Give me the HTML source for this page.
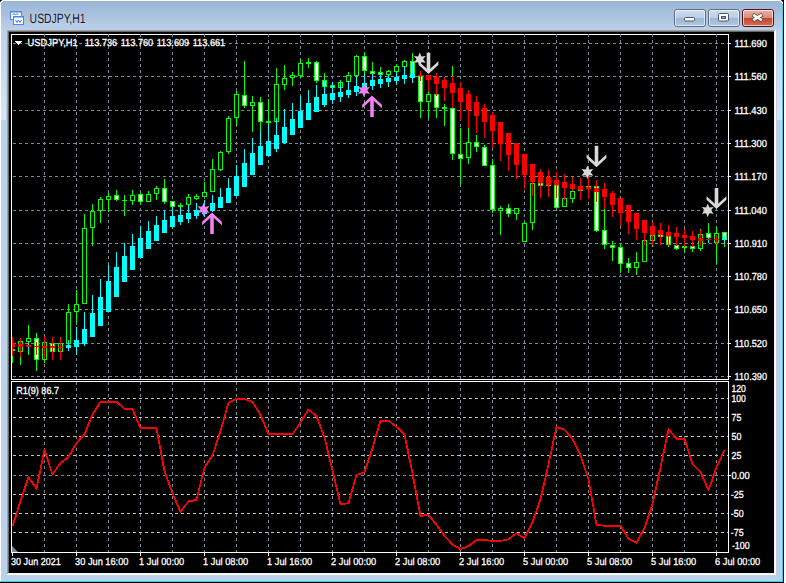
<!DOCTYPE html>
<html lang="en"><head><meta charset="utf-8"><title>USDJPY,H1</title>
<style>html,body{margin:0;padding:0;background:#fff;overflow:hidden}svg{display:block}text{font-family:"Liberation Sans",sans-serif;}.ax{font-size:10.2px;fill:#fff;stroke:#fff;stroke-width:0.3px}</style></head><body>
<svg width="786" height="583" viewBox="0 0 786 583">
<defs><linearGradient id="tb" x1="0" y1="0" x2="0" y2="1"><stop offset="0" stop-color="#9ab5d5"/><stop offset="0.5" stop-color="#a9c2df"/><stop offset="1" stop-color="#bdd2eb"/></linearGradient><linearGradient id="bt" x1="0" y1="0" x2="0" y2="1"><stop offset="0" stop-color="#cbdbee"/><stop offset="0.47" stop-color="#bccfe6"/><stop offset="0.5" stop-color="#9eb6d4"/><stop offset="1" stop-color="#b2c8e2"/></linearGradient><linearGradient id="bc" x1="0" y1="0" x2="0" y2="1"><stop offset="0" stop-color="#ebb5a8"/><stop offset="0.47" stop-color="#dc8c7b"/><stop offset="0.5" stop-color="#c2452c"/><stop offset="1" stop-color="#d4705a"/></linearGradient><clipPath id="cm"><rect x="12" y="35" width="716" height="344"/></clipPath><clipPath id="ci"><rect x="12" y="382" width="716" height="170"/></clipPath></defs>
<rect width="786" height="583" fill="#fff"/>
<rect x="0" y="0" width="2" height="2" fill="#000"/>
<rect x="781" y="0" width="3" height="2" fill="#000"/>
<path d="M0 583 V4 Q0 0 4 0 H779 Q783 0 783 4 V583 Z" fill="#fff"/>
<path d="M1 583 V5 Q1 1 5 1 H778 Q782 1 782 5 V583 Z" fill="#bad1ea"/>
<path d="M1 31 V5 Q1 1 5 1 H778 Q782 1 782 5 V31 Z" fill="url(#tb)"/>
<linearGradient id="sb" x1="0" y1="0" x2="0" y2="1"><stop offset="0" stop-color="#bdd2eb"/><stop offset="1" stop-color="#d8e6f4"/></linearGradient>
<rect x="1" y="30" width="5" height="90" fill="url(#sb)"/>
<rect x="777" y="30" width="5" height="90" fill="url(#sb)"/>
<rect x="781" y="120" width="1" height="461" fill="#c3cde3"/>
<rect x="1" y="580" width="781" height="1" fill="#c3cde3"/>
<rect x="782" y="4" width="1" height="579" fill="#3fcff5"/>
<rect x="783" y="2" width="1" height="581" fill="#000"/>
<rect x="0" y="581" width="783" height="1" fill="#30d0f0"/>
<rect x="0" y="582" width="784" height="1" fill="#000"/>
<rect x="7" y="30" width="769" height="545" fill="#fff"/>
<rect x="7" y="30" width="768" height="544" fill="#a0a0a0"/>
<rect x="8" y="31" width="767" height="543" fill="#eeeeee"/>
<rect x="8" y="31" width="766" height="542" fill="#696969"/>
<rect x="9" y="32" width="765" height="541" fill="#000"/>
<g shape-rendering="crispEdges"><rect x="10.5" y="11.5" width="11" height="8" fill="#fff" stroke="#4a86f0"/><rect x="11" y="12" width="10" height="1" fill="#9cc0f8"/><rect x="13.5" y="16.5" width="10" height="8" fill="#fff" stroke="#4a86f0"/><rect x="14" y="17" width="9" height="1" fill="#9cc0f8"/></g><path d="M12.5 15 l1.5 -1.5 l1.5 1.5 l1.5 -1.5 l1.5 1.5" fill="none" stroke="#3a78e8" stroke-width="1"/><path d="M15.5 20 l1.5 2.5 l1.5 -2.5 l1.5 2.5 l1.5 -2.5" fill="none" stroke="#3a78e8" stroke-width="1"/>
<text transform="translate(29.6,23.1) rotate(0.03)" font-size="13.6px" fill="#fff" stroke="#fff" stroke-width="3" opacity="0.12" textLength="56" lengthAdjust="spacingAndGlyphs">USDJPY,H1</text>
<text transform="translate(29.6,23.1) rotate(0.03)" font-size="13.6px" fill="#16162e" textLength="56" lengthAdjust="spacingAndGlyphs">USDJPY,H1</text>
<rect x="674.5" y="9.5" width="31" height="17" rx="2.5" ry="2.5" fill="url(#bt)" stroke="#5c6f8a"/>
<rect x="675.5" y="10.5" width="29" height="15" rx="1.5" ry="1.5" fill="none" stroke="#fff" stroke-opacity="0.6"/>
<rect x="708.5" y="9.5" width="31" height="17" rx="2.5" ry="2.5" fill="url(#bt)" stroke="#5c6f8a"/>
<rect x="709.5" y="10.5" width="29" height="15" rx="1.5" ry="1.5" fill="none" stroke="#fff" stroke-opacity="0.6"/>
<rect x="742.5" y="9.5" width="31" height="17" rx="2.5" ry="2.5" fill="url(#bc)" stroke="#4a1420"/>
<rect x="743.5" y="10.5" width="29" height="15" rx="1.5" ry="1.5" fill="none" stroke="#fff" stroke-opacity="0.6"/>
<rect x="684.5" y="17.5" width="10" height="3.5" rx="1" fill="#fff" stroke="#4a5468"/>
<rect x="718.5" y="13.5" width="10" height="7.5" rx="1" fill="#fff" stroke="#4a5468"/>
<rect x="721.5" y="16.5" width="4" height="2" fill="#8fa6c4" stroke="#4a5468"/>
<path d="M754.3 15.5 L760.7 19.5 M760.7 15.5 L754.3 19.5" stroke="#6a4a4a" stroke-width="4" stroke-linecap="square" fill="none"/>
<path d="M754.3 15.5 L760.7 19.5 M760.7 15.5 L754.3 19.5" stroke="#fff" stroke-width="2.5" stroke-linecap="square" fill="none"/>
<g shape-rendering="crispEdges">
<rect x="11" y="34" width="718" height="1" fill="#ffffff"/>
<rect x="11" y="34" width="1" height="346" fill="#ffffff"/>
<rect x="728" y="34" width="1" height="346" fill="#ffffff"/>
<rect x="11" y="379" width="718" height="1" fill="#ffffff"/>
<rect x="11" y="381" width="718" height="1" fill="#ffffff"/>
<rect x="11" y="381" width="1" height="172" fill="#ffffff"/>
<rect x="728" y="381" width="1" height="172" fill="#ffffff"/>
<rect x="11" y="552" width="718" height="1" fill="#ffffff"/>
<line x1="13" x2="728" y1="43.5" y2="43.5" stroke="#778899" stroke-dasharray="3 3"/>
<rect x="729" y="43" width="2" height="1" fill="#ffffff"/>
<line x1="13" x2="728" y1="76.5" y2="76.5" stroke="#778899" stroke-dasharray="3 3"/>
<rect x="729" y="76" width="2" height="1" fill="#ffffff"/>
<line x1="13" x2="728" y1="110.5" y2="110.5" stroke="#778899" stroke-dasharray="3 3"/>
<rect x="729" y="110" width="2" height="1" fill="#ffffff"/>
<line x1="13" x2="728" y1="143.5" y2="143.5" stroke="#778899" stroke-dasharray="3 3"/>
<rect x="729" y="143" width="2" height="1" fill="#ffffff"/>
<line x1="13" x2="728" y1="176.5" y2="176.5" stroke="#778899" stroke-dasharray="3 3"/>
<rect x="729" y="176" width="2" height="1" fill="#ffffff"/>
<line x1="13" x2="728" y1="210.5" y2="210.5" stroke="#778899" stroke-dasharray="3 3"/>
<rect x="729" y="210" width="2" height="1" fill="#ffffff"/>
<line x1="13" x2="728" y1="243.5" y2="243.5" stroke="#778899" stroke-dasharray="3 3"/>
<rect x="729" y="243" width="2" height="1" fill="#ffffff"/>
<line x1="13" x2="728" y1="276.5" y2="276.5" stroke="#778899" stroke-dasharray="3 3"/>
<rect x="729" y="276" width="2" height="1" fill="#ffffff"/>
<line x1="13" x2="728" y1="309.5" y2="309.5" stroke="#778899" stroke-dasharray="3 3"/>
<rect x="729" y="309" width="2" height="1" fill="#ffffff"/>
<line x1="13" x2="728" y1="343.5" y2="343.5" stroke="#778899" stroke-dasharray="3 3"/>
<rect x="729" y="343" width="2" height="1" fill="#ffffff"/>
<line x1="13" x2="728" y1="376.5" y2="376.5" stroke="#778899" stroke-dasharray="3 3"/>
<rect x="729" y="376" width="2" height="1" fill="#ffffff"/>
<line x1="44.5" x2="44.5" y1="34" y2="379" stroke="#778899" stroke-dasharray="3 3"/>
<line x1="44.5" x2="44.5" y1="382" y2="552" stroke="#778899" stroke-dasharray="3 3" stroke-dashoffset="0"/>
<line x1="76.5" x2="76.5" y1="34" y2="379" stroke="#778899" stroke-dasharray="3 3"/>
<line x1="76.5" x2="76.5" y1="382" y2="552" stroke="#778899" stroke-dasharray="3 3" stroke-dashoffset="0"/>
<line x1="108.5" x2="108.5" y1="34" y2="379" stroke="#778899" stroke-dasharray="3 3"/>
<line x1="108.5" x2="108.5" y1="382" y2="552" stroke="#778899" stroke-dasharray="3 3" stroke-dashoffset="0"/>
<line x1="140.5" x2="140.5" y1="34" y2="379" stroke="#778899" stroke-dasharray="3 3"/>
<line x1="140.5" x2="140.5" y1="382" y2="552" stroke="#778899" stroke-dasharray="3 3" stroke-dashoffset="0"/>
<line x1="172.5" x2="172.5" y1="34" y2="379" stroke="#778899" stroke-dasharray="3 3"/>
<line x1="172.5" x2="172.5" y1="382" y2="552" stroke="#778899" stroke-dasharray="3 3" stroke-dashoffset="0"/>
<line x1="204.5" x2="204.5" y1="34" y2="379" stroke="#778899" stroke-dasharray="3 3"/>
<line x1="204.5" x2="204.5" y1="382" y2="552" stroke="#778899" stroke-dasharray="3 3" stroke-dashoffset="0"/>
<line x1="236.5" x2="236.5" y1="34" y2="379" stroke="#778899" stroke-dasharray="3 3"/>
<line x1="236.5" x2="236.5" y1="382" y2="552" stroke="#778899" stroke-dasharray="3 3" stroke-dashoffset="0"/>
<line x1="268.5" x2="268.5" y1="34" y2="379" stroke="#778899" stroke-dasharray="3 3"/>
<line x1="268.5" x2="268.5" y1="382" y2="552" stroke="#778899" stroke-dasharray="3 3" stroke-dashoffset="0"/>
<line x1="300.5" x2="300.5" y1="34" y2="379" stroke="#778899" stroke-dasharray="3 3"/>
<line x1="300.5" x2="300.5" y1="382" y2="552" stroke="#778899" stroke-dasharray="3 3" stroke-dashoffset="0"/>
<line x1="332.5" x2="332.5" y1="34" y2="379" stroke="#778899" stroke-dasharray="3 3"/>
<line x1="332.5" x2="332.5" y1="382" y2="552" stroke="#778899" stroke-dasharray="3 3" stroke-dashoffset="0"/>
<line x1="364.5" x2="364.5" y1="34" y2="379" stroke="#778899" stroke-dasharray="3 3"/>
<line x1="364.5" x2="364.5" y1="382" y2="552" stroke="#778899" stroke-dasharray="3 3" stroke-dashoffset="0"/>
<line x1="396.5" x2="396.5" y1="34" y2="379" stroke="#778899" stroke-dasharray="3 3"/>
<line x1="396.5" x2="396.5" y1="382" y2="552" stroke="#778899" stroke-dasharray="3 3" stroke-dashoffset="0"/>
<line x1="428.5" x2="428.5" y1="34" y2="379" stroke="#778899" stroke-dasharray="3 3"/>
<line x1="428.5" x2="428.5" y1="382" y2="552" stroke="#778899" stroke-dasharray="3 3" stroke-dashoffset="0"/>
<line x1="460.5" x2="460.5" y1="34" y2="379" stroke="#778899" stroke-dasharray="3 3"/>
<line x1="460.5" x2="460.5" y1="382" y2="552" stroke="#778899" stroke-dasharray="3 3" stroke-dashoffset="0"/>
<line x1="492.5" x2="492.5" y1="34" y2="379" stroke="#778899" stroke-dasharray="3 3"/>
<line x1="492.5" x2="492.5" y1="382" y2="552" stroke="#778899" stroke-dasharray="3 3" stroke-dashoffset="0"/>
<line x1="524.5" x2="524.5" y1="34" y2="379" stroke="#778899" stroke-dasharray="3 3"/>
<line x1="524.5" x2="524.5" y1="382" y2="552" stroke="#778899" stroke-dasharray="3 3" stroke-dashoffset="0"/>
<line x1="556.5" x2="556.5" y1="34" y2="379" stroke="#778899" stroke-dasharray="3 3"/>
<line x1="556.5" x2="556.5" y1="382" y2="552" stroke="#778899" stroke-dasharray="3 3" stroke-dashoffset="0"/>
<line x1="588.5" x2="588.5" y1="34" y2="379" stroke="#778899" stroke-dasharray="3 3"/>
<line x1="588.5" x2="588.5" y1="382" y2="552" stroke="#778899" stroke-dasharray="3 3" stroke-dashoffset="0"/>
<line x1="620.5" x2="620.5" y1="34" y2="379" stroke="#778899" stroke-dasharray="3 3"/>
<line x1="620.5" x2="620.5" y1="382" y2="552" stroke="#778899" stroke-dasharray="3 3" stroke-dashoffset="0"/>
<line x1="652.5" x2="652.5" y1="34" y2="379" stroke="#778899" stroke-dasharray="3 3"/>
<line x1="652.5" x2="652.5" y1="382" y2="552" stroke="#778899" stroke-dasharray="3 3" stroke-dashoffset="0"/>
<line x1="684.5" x2="684.5" y1="34" y2="379" stroke="#778899" stroke-dasharray="3 3"/>
<line x1="684.5" x2="684.5" y1="382" y2="552" stroke="#778899" stroke-dasharray="3 3" stroke-dashoffset="0"/>
<line x1="716.5" x2="716.5" y1="34" y2="379" stroke="#778899" stroke-dasharray="3 3"/>
<line x1="716.5" x2="716.5" y1="382" y2="552" stroke="#778899" stroke-dasharray="3 3" stroke-dashoffset="0"/>
<line x1="13" x2="728" y1="398.5" y2="398.5" stroke="#c4c4c4" stroke-dasharray="3 3"/>
<line x1="13" x2="728" y1="417.5" y2="417.5" stroke="#c4c4c4" stroke-dasharray="3 3"/>
<line x1="13" x2="728" y1="436.5" y2="436.5" stroke="#c4c4c4" stroke-dasharray="3 3"/>
<line x1="13" x2="728" y1="455.5" y2="455.5" stroke="#c4c4c4" stroke-dasharray="3 3"/>
<line x1="13" x2="728" y1="494.5" y2="494.5" stroke="#c4c4c4" stroke-dasharray="3 3"/>
<line x1="13" x2="728" y1="513.5" y2="513.5" stroke="#c4c4c4" stroke-dasharray="3 3"/>
<line x1="13" x2="728" y1="532.5" y2="532.5" stroke="#c4c4c4" stroke-dasharray="3 3"/>
<line x1="13" x2="728" y1="475.5" y2="475.5" stroke="#778899" stroke-dasharray="3 3"/>
<rect x="729" y="475" width="2" height="1" fill="#ffffff"/>
<rect x="12" y="553" width="1" height="3" fill="#ffffff"/>
<rect x="76" y="553" width="1" height="3" fill="#ffffff"/>
<rect x="140" y="553" width="1" height="3" fill="#ffffff"/>
<rect x="204" y="553" width="1" height="3" fill="#ffffff"/>
<rect x="268" y="553" width="1" height="3" fill="#ffffff"/>
<rect x="332" y="553" width="1" height="3" fill="#ffffff"/>
<rect x="396" y="553" width="1" height="3" fill="#ffffff"/>
<rect x="460" y="553" width="1" height="3" fill="#ffffff"/>
<rect x="524" y="553" width="1" height="3" fill="#ffffff"/>
<rect x="588" y="553" width="1" height="3" fill="#ffffff"/>
<rect x="652" y="553" width="1" height="3" fill="#ffffff"/>
<rect x="716" y="553" width="1" height="3" fill="#ffffff"/>
</g>
<g shape-rendering="crispEdges" clip-path="url(#cm)">
<rect x="12" y="337" width="1" height="26" fill="#00ff00"/>
<rect x="10" y="349" width="5" height="2" fill="#00ff00"/>
<rect x="20" y="338" width="1" height="27" fill="#00ff00"/>
<rect x="18" y="341" width="5" height="11" fill="#00ff00"/>
<rect x="19" y="342" width="3" height="9" fill="#000"/>
<rect x="28" y="325" width="1" height="30" fill="#00ff00"/>
<rect x="26" y="338" width="5" height="4" fill="#00ff00"/>
<rect x="27" y="339" width="3" height="2" fill="#000"/>
<rect x="36" y="333" width="1" height="38" fill="#00ff00"/>
<rect x="34" y="338" width="5" height="22" fill="#00ff00"/>
<rect x="35" y="339" width="3" height="20" fill="#fff"/>
<rect x="44" y="336" width="1" height="27" fill="#00ff00"/>
<rect x="42" y="342" width="5" height="18" fill="#00ff00"/>
<rect x="43" y="343" width="3" height="16" fill="#000"/>
<rect x="52" y="337" width="1" height="23" fill="#00ff00"/>
<rect x="50" y="343" width="5" height="9" fill="#00ff00"/>
<rect x="51" y="344" width="3" height="7" fill="#fff"/>
<rect x="60" y="337" width="1" height="23" fill="#00ff00"/>
<rect x="58" y="343" width="5" height="9" fill="#00ff00"/>
<rect x="59" y="344" width="3" height="7" fill="#000"/>
<rect x="68" y="304" width="1" height="40" fill="#00ff00"/>
<rect x="66" y="312" width="5" height="32" fill="#00ff00"/>
<rect x="67" y="313" width="3" height="30" fill="#000"/>
<rect x="76" y="290" width="1" height="33" fill="#00ff00"/>
<rect x="74" y="304" width="5" height="8" fill="#00ff00"/>
<rect x="75" y="305" width="3" height="6" fill="#000"/>
<rect x="84" y="214" width="1" height="90" fill="#00ff00"/>
<rect x="82" y="228" width="5" height="76" fill="#00ff00"/>
<rect x="83" y="229" width="3" height="74" fill="#000"/>
<rect x="92" y="204" width="1" height="42" fill="#00ff00"/>
<rect x="90" y="211" width="5" height="17" fill="#00ff00"/>
<rect x="91" y="212" width="3" height="15" fill="#000"/>
<rect x="100" y="197" width="1" height="26" fill="#00ff00"/>
<rect x="98" y="199" width="5" height="12" fill="#00ff00"/>
<rect x="99" y="200" width="3" height="10" fill="#000"/>
<rect x="108" y="193" width="1" height="19" fill="#00ff00"/>
<rect x="106" y="196" width="5" height="4" fill="#00ff00"/>
<rect x="107" y="197" width="3" height="2" fill="#000"/>
<rect x="116" y="190" width="1" height="11" fill="#00ff00"/>
<rect x="114" y="195" width="5" height="5" fill="#00ff00"/>
<rect x="115" y="196" width="3" height="3" fill="#fff"/>
<rect x="124" y="195" width="1" height="21" fill="#00ff00"/>
<rect x="122" y="200" width="5" height="1" fill="#00ff00"/>
<rect x="132" y="190" width="1" height="15" fill="#00ff00"/>
<rect x="130" y="195" width="5" height="6" fill="#00ff00"/>
<rect x="131" y="196" width="3" height="4" fill="#000"/>
<rect x="140" y="193" width="1" height="12" fill="#00ff00"/>
<rect x="138" y="194" width="5" height="8" fill="#00ff00"/>
<rect x="139" y="195" width="3" height="6" fill="#fff"/>
<rect x="148" y="191" width="1" height="11" fill="#00ff00"/>
<rect x="146" y="194" width="5" height="8" fill="#00ff00"/>
<rect x="147" y="195" width="3" height="6" fill="#000"/>
<rect x="156" y="186" width="1" height="14" fill="#00ff00"/>
<rect x="154" y="188" width="5" height="6" fill="#00ff00"/>
<rect x="155" y="189" width="3" height="4" fill="#000"/>
<rect x="164" y="179" width="1" height="25" fill="#00ff00"/>
<rect x="162" y="188" width="5" height="14" fill="#00ff00"/>
<rect x="163" y="189" width="3" height="12" fill="#fff"/>
<rect x="172" y="201" width="1" height="9" fill="#00ff00"/>
<rect x="170" y="201" width="5" height="6" fill="#00ff00"/>
<rect x="171" y="202" width="3" height="4" fill="#fff"/>
<rect x="180" y="203" width="1" height="7" fill="#00ff00"/>
<rect x="178" y="205" width="5" height="2" fill="#00ff00"/>
<rect x="188" y="194" width="1" height="13" fill="#00ff00"/>
<rect x="186" y="197" width="5" height="8" fill="#00ff00"/>
<rect x="187" y="198" width="3" height="6" fill="#000"/>
<rect x="196" y="194" width="1" height="6" fill="#00ff00"/>
<rect x="194" y="196" width="5" height="3" fill="#00ff00"/>
<rect x="195" y="197" width="3" height="1" fill="#000"/>
<rect x="204" y="182" width="1" height="15" fill="#00ff00"/>
<rect x="202" y="192" width="5" height="5" fill="#00ff00"/>
<rect x="203" y="193" width="3" height="3" fill="#000"/>
<rect x="212" y="159" width="1" height="33" fill="#00ff00"/>
<rect x="210" y="169" width="5" height="23" fill="#00ff00"/>
<rect x="211" y="170" width="3" height="21" fill="#000"/>
<rect x="220" y="151" width="1" height="20" fill="#00ff00"/>
<rect x="218" y="152" width="5" height="18" fill="#00ff00"/>
<rect x="219" y="153" width="3" height="16" fill="#000"/>
<rect x="228" y="116" width="1" height="38" fill="#00ff00"/>
<rect x="226" y="118" width="5" height="34" fill="#00ff00"/>
<rect x="227" y="119" width="3" height="32" fill="#000"/>
<rect x="236" y="91" width="1" height="35" fill="#00ff00"/>
<rect x="234" y="94" width="5" height="24" fill="#00ff00"/>
<rect x="235" y="95" width="3" height="22" fill="#000"/>
<rect x="244" y="61" width="1" height="47" fill="#00ff00"/>
<rect x="242" y="95" width="5" height="11" fill="#00ff00"/>
<rect x="243" y="96" width="3" height="9" fill="#fff"/>
<rect x="252" y="96" width="1" height="36" fill="#00ff00"/>
<rect x="250" y="102" width="5" height="4" fill="#00ff00"/>
<rect x="251" y="103" width="3" height="2" fill="#000"/>
<rect x="260" y="97" width="1" height="34" fill="#00ff00"/>
<rect x="258" y="102" width="5" height="20" fill="#00ff00"/>
<rect x="259" y="103" width="3" height="18" fill="#fff"/>
<rect x="268" y="99" width="1" height="24" fill="#00ff00"/>
<rect x="266" y="121" width="5" height="2" fill="#00ff00"/>
<rect x="276" y="68" width="1" height="54" fill="#00ff00"/>
<rect x="274" y="84" width="5" height="38" fill="#00ff00"/>
<rect x="275" y="85" width="3" height="36" fill="#000"/>
<rect x="284" y="65" width="1" height="25" fill="#00ff00"/>
<rect x="282" y="78" width="5" height="7" fill="#00ff00"/>
<rect x="283" y="79" width="3" height="5" fill="#000"/>
<rect x="292" y="72" width="1" height="14" fill="#00ff00"/>
<rect x="290" y="75" width="5" height="3" fill="#00ff00"/>
<rect x="291" y="76" width="3" height="1" fill="#000"/>
<rect x="300" y="59" width="1" height="19" fill="#00ff00"/>
<rect x="298" y="63" width="5" height="13" fill="#00ff00"/>
<rect x="299" y="64" width="3" height="11" fill="#000"/>
<rect x="308" y="58" width="1" height="10" fill="#00ff00"/>
<rect x="306" y="62" width="5" height="2" fill="#00ff00"/>
<rect x="316" y="61" width="1" height="22" fill="#00ff00"/>
<rect x="314" y="62" width="5" height="19" fill="#00ff00"/>
<rect x="315" y="63" width="3" height="17" fill="#fff"/>
<rect x="324" y="73" width="1" height="17" fill="#00ff00"/>
<rect x="322" y="80" width="5" height="7" fill="#00ff00"/>
<rect x="323" y="81" width="3" height="5" fill="#fff"/>
<rect x="332" y="82" width="1" height="8" fill="#00ff00"/>
<rect x="330" y="85" width="5" height="3" fill="#00ff00"/>
<rect x="331" y="86" width="3" height="1" fill="#fff"/>
<rect x="340" y="80" width="1" height="8" fill="#00ff00"/>
<rect x="338" y="82" width="5" height="6" fill="#00ff00"/>
<rect x="339" y="83" width="3" height="4" fill="#000"/>
<rect x="348" y="72" width="1" height="11" fill="#00ff00"/>
<rect x="346" y="75" width="5" height="7" fill="#00ff00"/>
<rect x="347" y="76" width="3" height="5" fill="#000"/>
<rect x="356" y="55" width="1" height="21" fill="#00ff00"/>
<rect x="354" y="56" width="5" height="20" fill="#00ff00"/>
<rect x="355" y="57" width="3" height="18" fill="#000"/>
<rect x="364" y="52" width="1" height="22" fill="#00ff00"/>
<rect x="362" y="56" width="5" height="15" fill="#00ff00"/>
<rect x="363" y="57" width="3" height="13" fill="#fff"/>
<rect x="372" y="62" width="1" height="12" fill="#00ff00"/>
<rect x="370" y="71" width="5" height="3" fill="#00ff00"/>
<rect x="371" y="72" width="3" height="1" fill="#fff"/>
<rect x="380" y="67" width="1" height="8" fill="#00ff00"/>
<rect x="378" y="72" width="5" height="3" fill="#00ff00"/>
<rect x="379" y="73" width="3" height="1" fill="#fff"/>
<rect x="388" y="70" width="1" height="5" fill="#00ff00"/>
<rect x="386" y="71" width="5" height="4" fill="#00ff00"/>
<rect x="387" y="72" width="3" height="2" fill="#000"/>
<rect x="396" y="64" width="1" height="8" fill="#00ff00"/>
<rect x="394" y="66" width="5" height="6" fill="#00ff00"/>
<rect x="395" y="67" width="3" height="4" fill="#000"/>
<rect x="404" y="60" width="1" height="7" fill="#00ff00"/>
<rect x="402" y="61" width="5" height="6" fill="#00ff00"/>
<rect x="403" y="62" width="3" height="4" fill="#000"/>
<rect x="412" y="53" width="1" height="22" fill="#00ff00"/>
<rect x="410" y="61" width="5" height="14" fill="#00ff00"/>
<rect x="411" y="62" width="3" height="12" fill="#fff"/>
<rect x="420" y="71" width="1" height="47" fill="#00ff00"/>
<rect x="418" y="76" width="5" height="26" fill="#00ff00"/>
<rect x="419" y="77" width="3" height="24" fill="#fff"/>
<rect x="428" y="92" width="1" height="26" fill="#00ff00"/>
<rect x="426" y="94" width="5" height="8" fill="#00ff00"/>
<rect x="427" y="95" width="3" height="6" fill="#000"/>
<rect x="436" y="94" width="1" height="24" fill="#00ff00"/>
<rect x="434" y="94" width="5" height="14" fill="#00ff00"/>
<rect x="435" y="95" width="3" height="12" fill="#fff"/>
<rect x="444" y="104" width="1" height="22" fill="#00ff00"/>
<rect x="442" y="107" width="5" height="2" fill="#00ff00"/>
<rect x="452" y="66" width="1" height="94" fill="#00ff00"/>
<rect x="450" y="108" width="5" height="46" fill="#00ff00"/>
<rect x="451" y="109" width="3" height="44" fill="#fff"/>
<rect x="460" y="128" width="1" height="56" fill="#00ff00"/>
<rect x="458" y="154" width="5" height="5" fill="#00ff00"/>
<rect x="459" y="155" width="3" height="3" fill="#fff"/>
<rect x="468" y="128" width="1" height="36" fill="#00ff00"/>
<rect x="466" y="142" width="5" height="16" fill="#00ff00"/>
<rect x="467" y="143" width="3" height="14" fill="#000"/>
<rect x="476" y="135" width="1" height="17" fill="#00ff00"/>
<rect x="474" y="142" width="5" height="5" fill="#00ff00"/>
<rect x="475" y="143" width="3" height="3" fill="#fff"/>
<rect x="484" y="145" width="1" height="21" fill="#00ff00"/>
<rect x="482" y="147" width="5" height="19" fill="#00ff00"/>
<rect x="483" y="148" width="3" height="17" fill="#fff"/>
<rect x="492" y="159" width="1" height="54" fill="#00ff00"/>
<rect x="490" y="165" width="5" height="45" fill="#00ff00"/>
<rect x="491" y="166" width="3" height="43" fill="#fff"/>
<rect x="500" y="206" width="1" height="29" fill="#00ff00"/>
<rect x="498" y="208" width="5" height="3" fill="#00ff00"/>
<rect x="499" y="209" width="3" height="1" fill="#000"/>
<rect x="508" y="204" width="1" height="13" fill="#00ff00"/>
<rect x="506" y="208" width="5" height="6" fill="#00ff00"/>
<rect x="507" y="209" width="3" height="4" fill="#fff"/>
<rect x="516" y="208" width="1" height="12" fill="#00ff00"/>
<rect x="514" y="208" width="5" height="6" fill="#00ff00"/>
<rect x="515" y="209" width="3" height="4" fill="#000"/>
<rect x="524" y="222" width="1" height="20" fill="#00ff00"/>
<rect x="522" y="223" width="5" height="19" fill="#00ff00"/>
<rect x="523" y="224" width="3" height="17" fill="#000"/>
<rect x="532" y="183" width="1" height="47" fill="#00ff00"/>
<rect x="530" y="183" width="5" height="40" fill="#00ff00"/>
<rect x="531" y="184" width="3" height="38" fill="#000"/>
<rect x="540" y="183" width="1" height="7" fill="#00ff00"/>
<rect x="538" y="183" width="5" height="3" fill="#00ff00"/>
<rect x="539" y="184" width="3" height="1" fill="#fff"/>
<rect x="548" y="185" width="1" height="1" fill="#00ff00"/>
<rect x="546" y="185" width="5" height="1" fill="#00ff00"/>
<rect x="556" y="185" width="1" height="24" fill="#00ff00"/>
<rect x="554" y="185" width="5" height="23" fill="#00ff00"/>
<rect x="555" y="186" width="3" height="21" fill="#fff"/>
<rect x="564" y="198" width="1" height="9" fill="#00ff00"/>
<rect x="562" y="198" width="5" height="9" fill="#00ff00"/>
<rect x="563" y="199" width="3" height="7" fill="#000"/>
<rect x="572" y="191" width="1" height="12" fill="#00ff00"/>
<rect x="570" y="191" width="5" height="8" fill="#00ff00"/>
<rect x="571" y="192" width="3" height="6" fill="#000"/>
<rect x="580" y="189" width="1" height="2" fill="#00ff00"/>
<rect x="578" y="190" width="5" height="1" fill="#00ff00"/>
<rect x="588" y="186" width="1" height="1" fill="#00ff00"/>
<rect x="586" y="186" width="5" height="1" fill="#00ff00"/>
<rect x="596" y="186" width="1" height="46" fill="#00ff00"/>
<rect x="594" y="186" width="5" height="45" fill="#00ff00"/>
<rect x="595" y="187" width="3" height="43" fill="#fff"/>
<rect x="604" y="209" width="1" height="40" fill="#00ff00"/>
<rect x="602" y="230" width="5" height="15" fill="#00ff00"/>
<rect x="603" y="231" width="3" height="13" fill="#fff"/>
<rect x="612" y="241" width="1" height="20" fill="#00ff00"/>
<rect x="610" y="245" width="5" height="3" fill="#00ff00"/>
<rect x="611" y="246" width="3" height="1" fill="#fff"/>
<rect x="620" y="244" width="1" height="29" fill="#00ff00"/>
<rect x="618" y="247" width="5" height="17" fill="#00ff00"/>
<rect x="619" y="248" width="3" height="15" fill="#fff"/>
<rect x="628" y="258" width="1" height="15" fill="#00ff00"/>
<rect x="626" y="263" width="5" height="5" fill="#00ff00"/>
<rect x="627" y="264" width="3" height="3" fill="#fff"/>
<rect x="636" y="252" width="1" height="23" fill="#00ff00"/>
<rect x="634" y="262" width="5" height="6" fill="#00ff00"/>
<rect x="635" y="263" width="3" height="4" fill="#000"/>
<rect x="644" y="240" width="1" height="22" fill="#00ff00"/>
<rect x="642" y="240" width="5" height="22" fill="#00ff00"/>
<rect x="643" y="241" width="3" height="20" fill="#000"/>
<rect x="652" y="235" width="1" height="12" fill="#00ff00"/>
<rect x="650" y="235" width="5" height="6" fill="#00ff00"/>
<rect x="651" y="236" width="3" height="4" fill="#000"/>
<rect x="660" y="234" width="1" height="4" fill="#00ff00"/>
<rect x="658" y="234" width="5" height="3" fill="#00ff00"/>
<rect x="659" y="235" width="3" height="1" fill="#fff"/>
<rect x="668" y="236" width="1" height="11" fill="#00ff00"/>
<rect x="666" y="236" width="5" height="9" fill="#00ff00"/>
<rect x="667" y="237" width="3" height="7" fill="#fff"/>
<rect x="676" y="245" width="1" height="5" fill="#00ff00"/>
<rect x="674" y="245" width="5" height="4" fill="#00ff00"/>
<rect x="675" y="246" width="3" height="2" fill="#fff"/>
<rect x="684" y="246" width="1" height="7" fill="#00ff00"/>
<rect x="682" y="246" width="5" height="2" fill="#00ff00"/>
<rect x="692" y="246" width="1" height="6" fill="#00ff00"/>
<rect x="690" y="246" width="5" height="3" fill="#00ff00"/>
<rect x="691" y="247" width="3" height="1" fill="#fff"/>
<rect x="700" y="229" width="1" height="22" fill="#00ff00"/>
<rect x="698" y="234" width="5" height="15" fill="#00ff00"/>
<rect x="699" y="235" width="3" height="13" fill="#000"/>
<rect x="708" y="223" width="1" height="15" fill="#00ff00"/>
<rect x="706" y="233" width="5" height="5" fill="#00ff00"/>
<rect x="707" y="234" width="3" height="3" fill="#fff"/>
<rect x="716" y="227" width="1" height="37" fill="#00ff00"/>
<rect x="714" y="233" width="5" height="10" fill="#00ff00"/>
<rect x="715" y="234" width="3" height="8" fill="#000"/>
<rect x="724" y="232" width="1" height="15" fill="#00ff00"/>
<rect x="722" y="232" width="5" height="8" fill="#00ff00"/>
<rect x="723" y="233" width="3" height="6" fill="#fff"/>
<rect x="12" y="337" width="1" height="19" fill="#FF0000"/>
<rect x="10" y="343" width="5" height="4" fill="#FF0000"/>
<rect x="20" y="338" width="1" height="19" fill="#FF0000"/>
<rect x="18" y="344" width="5" height="3" fill="#FF0000"/>
<rect x="28" y="342" width="1" height="9" fill="#00FFFF"/>
<rect x="26" y="345" width="5" height="2" fill="#FF0000"/>
<rect x="36" y="342" width="1" height="13" fill="#FF0000"/>
<rect x="34" y="346" width="5" height="1" fill="#FF0000"/>
<rect x="44" y="336" width="1" height="23" fill="#FF0000"/>
<rect x="42" y="346" width="5" height="2" fill="#FF0000"/>
<rect x="52" y="337" width="1" height="23" fill="#FF0000"/>
<rect x="50" y="346" width="5" height="2" fill="#FF0000"/>
<rect x="60" y="337" width="1" height="23" fill="#FF0000"/>
<rect x="58" y="347" width="5" height="1" fill="#FF0000"/>
<rect x="68" y="340" width="1" height="11" fill="#00FFFF"/>
<rect x="66" y="345" width="5" height="3" fill="#00FFFF"/>
<rect x="76" y="327" width="1" height="28" fill="#00FFFF"/>
<rect x="74" y="340" width="5" height="7" fill="#00FFFF"/>
<rect x="84" y="312" width="1" height="34" fill="#00FFFF"/>
<rect x="82" y="329" width="5" height="15" fill="#00FFFF"/>
<rect x="92" y="295" width="1" height="42" fill="#00FFFF"/>
<rect x="90" y="313" width="5" height="24" fill="#00FFFF"/>
<rect x="100" y="279" width="1" height="47" fill="#00FFFF"/>
<rect x="98" y="297" width="5" height="29" fill="#00FFFF"/>
<rect x="108" y="265" width="1" height="47" fill="#00FFFF"/>
<rect x="106" y="281" width="5" height="31" fill="#00FFFF"/>
<rect x="116" y="252" width="1" height="45" fill="#00FFFF"/>
<rect x="114" y="267" width="5" height="30" fill="#00FFFF"/>
<rect x="124" y="243" width="1" height="39" fill="#00FFFF"/>
<rect x="122" y="256" width="5" height="26" fill="#00FFFF"/>
<rect x="132" y="234" width="1" height="36" fill="#00FFFF"/>
<rect x="130" y="246" width="5" height="24" fill="#00FFFF"/>
<rect x="140" y="226" width="1" height="32" fill="#00FFFF"/>
<rect x="138" y="238" width="5" height="20" fill="#00FFFF"/>
<rect x="148" y="221" width="1" height="28" fill="#00FFFF"/>
<rect x="146" y="231" width="5" height="18" fill="#00FFFF"/>
<rect x="156" y="216" width="1" height="25" fill="#00FFFF"/>
<rect x="154" y="225" width="5" height="16" fill="#00FFFF"/>
<rect x="164" y="210" width="1" height="23" fill="#00FFFF"/>
<rect x="162" y="220" width="5" height="13" fill="#00FFFF"/>
<rect x="172" y="207" width="1" height="21" fill="#00FFFF"/>
<rect x="170" y="216" width="5" height="11" fill="#00FFFF"/>
<rect x="180" y="207" width="1" height="18" fill="#00FFFF"/>
<rect x="178" y="215" width="5" height="7" fill="#00FFFF"/>
<rect x="188" y="205" width="1" height="18" fill="#00FFFF"/>
<rect x="186" y="213" width="5" height="6" fill="#00FFFF"/>
<rect x="196" y="203" width="1" height="16" fill="#00FFFF"/>
<rect x="194" y="210" width="5" height="6" fill="#00FFFF"/>
<rect x="204" y="200" width="1" height="17" fill="#00FFFF"/>
<rect x="202" y="207" width="5" height="7" fill="#00FFFF"/>
<rect x="212" y="195" width="1" height="17" fill="#00FFFF"/>
<rect x="210" y="203" width="5" height="8" fill="#00FFFF"/>
<rect x="220" y="188" width="1" height="20" fill="#00FFFF"/>
<rect x="218" y="197" width="5" height="11" fill="#00FFFF"/>
<rect x="228" y="178" width="1" height="25" fill="#00FFFF"/>
<rect x="226" y="188" width="5" height="15" fill="#00FFFF"/>
<rect x="236" y="165" width="1" height="31" fill="#00FFFF"/>
<rect x="234" y="176" width="5" height="20" fill="#00FFFF"/>
<rect x="244" y="149" width="1" height="38" fill="#00FFFF"/>
<rect x="242" y="163" width="5" height="24" fill="#00FFFF"/>
<rect x="252" y="138" width="1" height="37" fill="#00FFFF"/>
<rect x="250" y="153" width="5" height="22" fill="#00FFFF"/>
<rect x="260" y="131" width="1" height="34" fill="#00FFFF"/>
<rect x="258" y="146" width="5" height="19" fill="#00FFFF"/>
<rect x="268" y="123" width="1" height="34" fill="#00FFFF"/>
<rect x="266" y="141" width="5" height="15" fill="#00FFFF"/>
<rect x="276" y="118" width="1" height="34" fill="#00FFFF"/>
<rect x="274" y="135" width="5" height="14" fill="#00FFFF"/>
<rect x="284" y="109" width="1" height="35" fill="#00FFFF"/>
<rect x="282" y="127" width="5" height="16" fill="#00FFFF"/>
<rect x="292" y="103" width="1" height="32" fill="#00FFFF"/>
<rect x="290" y="119" width="5" height="16" fill="#00FFFF"/>
<rect x="300" y="96" width="1" height="32" fill="#00FFFF"/>
<rect x="298" y="111" width="5" height="17" fill="#00FFFF"/>
<rect x="308" y="90" width="1" height="30" fill="#00FFFF"/>
<rect x="306" y="103" width="5" height="17" fill="#00FFFF"/>
<rect x="316" y="85" width="1" height="27" fill="#00FFFF"/>
<rect x="314" y="97" width="5" height="15" fill="#00FFFF"/>
<rect x="324" y="81" width="1" height="26" fill="#00FFFF"/>
<rect x="322" y="94" width="5" height="11" fill="#00FFFF"/>
<rect x="332" y="82" width="1" height="22" fill="#00FFFF"/>
<rect x="330" y="93" width="5" height="7" fill="#00FFFF"/>
<rect x="340" y="83" width="1" height="19" fill="#00FFFF"/>
<rect x="338" y="92" width="5" height="5" fill="#00FFFF"/>
<rect x="348" y="81" width="1" height="17" fill="#00FFFF"/>
<rect x="346" y="90" width="5" height="5" fill="#00FFFF"/>
<rect x="356" y="76" width="1" height="20" fill="#00FFFF"/>
<rect x="354" y="86" width="5" height="6" fill="#00FFFF"/>
<rect x="364" y="74" width="1" height="19" fill="#00FFFF"/>
<rect x="362" y="83" width="5" height="7" fill="#00FFFF"/>
<rect x="372" y="74" width="1" height="16" fill="#00FFFF"/>
<rect x="370" y="80" width="5" height="6" fill="#00FFFF"/>
<rect x="380" y="74" width="1" height="14" fill="#00FFFF"/>
<rect x="378" y="79" width="5" height="5" fill="#00FFFF"/>
<rect x="388" y="75" width="1" height="12" fill="#00FFFF"/>
<rect x="386" y="78" width="5" height="4" fill="#00FFFF"/>
<rect x="396" y="72" width="1" height="13" fill="#00FFFF"/>
<rect x="394" y="77" width="5" height="4" fill="#00FFFF"/>
<rect x="404" y="67" width="1" height="17" fill="#00FFFF"/>
<rect x="402" y="75" width="5" height="4" fill="#00FFFF"/>
<rect x="412" y="63" width="1" height="20" fill="#00FFFF"/>
<rect x="410" y="74" width="5" height="4" fill="#00FFFF"/>
<rect x="420" y="71" width="1" height="10" fill="#FF0000"/>
<rect x="418" y="75" width="5" height="1" fill="#FF0000"/>
<rect x="428" y="75" width="1" height="17" fill="#FF0000"/>
<rect x="426" y="75" width="5" height="5" fill="#FF0000"/>
<rect x="436" y="73" width="1" height="23" fill="#FF0000"/>
<rect x="434" y="77" width="5" height="7" fill="#FF0000"/>
<rect x="444" y="77" width="1" height="24" fill="#FF0000"/>
<rect x="442" y="80" width="5" height="8" fill="#FF0000"/>
<rect x="452" y="76" width="1" height="32" fill="#FF0000"/>
<rect x="450" y="83" width="5" height="10" fill="#FF0000"/>
<rect x="460" y="82" width="1" height="38" fill="#FF0000"/>
<rect x="458" y="88" width="5" height="14" fill="#FF0000"/>
<rect x="468" y="90" width="1" height="38" fill="#FF0000"/>
<rect x="466" y="94" width="5" height="16" fill="#FF0000"/>
<rect x="476" y="96" width="1" height="37" fill="#FF0000"/>
<rect x="474" y="102" width="5" height="14" fill="#FF0000"/>
<rect x="484" y="104" width="1" height="34" fill="#FF0000"/>
<rect x="482" y="108" width="5" height="14" fill="#FF0000"/>
<rect x="492" y="112" width="1" height="36" fill="#FF0000"/>
<rect x="490" y="115" width="5" height="16" fill="#FF0000"/>
<rect x="500" y="122" width="1" height="39" fill="#FF0000"/>
<rect x="498" y="122" width="5" height="22" fill="#FF0000"/>
<rect x="508" y="133" width="1" height="38" fill="#FF0000"/>
<rect x="506" y="133" width="5" height="22" fill="#FF0000"/>
<rect x="516" y="143" width="1" height="36" fill="#FF0000"/>
<rect x="514" y="143" width="5" height="22" fill="#FF0000"/>
<rect x="524" y="154" width="1" height="35" fill="#FF0000"/>
<rect x="522" y="154" width="5" height="21" fill="#FF0000"/>
<rect x="532" y="164" width="1" height="32" fill="#FF0000"/>
<rect x="530" y="164" width="5" height="18" fill="#FF0000"/>
<rect x="540" y="169" width="1" height="29" fill="#FF0000"/>
<rect x="538" y="172" width="5" height="11" fill="#FF0000"/>
<rect x="548" y="170" width="1" height="27" fill="#FF0000"/>
<rect x="546" y="177" width="5" height="8" fill="#FF0000"/>
<rect x="556" y="172" width="1" height="26" fill="#FF0000"/>
<rect x="554" y="180" width="5" height="5" fill="#FF0000"/>
<rect x="564" y="174" width="1" height="26" fill="#FF0000"/>
<rect x="562" y="182" width="5" height="6" fill="#FF0000"/>
<rect x="572" y="177" width="1" height="14" fill="#FF0000"/>
<rect x="570" y="184" width="5" height="5" fill="#FF0000"/>
<rect x="580" y="178" width="1" height="22" fill="#FF0000"/>
<rect x="578" y="186" width="5" height="4" fill="#FF0000"/>
<rect x="588" y="177" width="1" height="22" fill="#FF0000"/>
<rect x="586" y="187" width="5" height="2" fill="#FF0000"/>
<rect x="596" y="180" width="1" height="22" fill="#FF0000"/>
<rect x="594" y="188" width="5" height="4" fill="#FF0000"/>
<rect x="604" y="183" width="1" height="26" fill="#FF0000"/>
<rect x="602" y="189" width="5" height="8" fill="#FF0000"/>
<rect x="612" y="191" width="1" height="26" fill="#FF0000"/>
<rect x="610" y="193" width="5" height="12" fill="#FF0000"/>
<rect x="620" y="198" width="1" height="28" fill="#FF0000"/>
<rect x="618" y="198" width="5" height="15" fill="#FF0000"/>
<rect x="628" y="205" width="1" height="29" fill="#FF0000"/>
<rect x="626" y="205" width="5" height="17" fill="#FF0000"/>
<rect x="636" y="213" width="1" height="27" fill="#FF0000"/>
<rect x="634" y="213" width="5" height="16" fill="#FF0000"/>
<rect x="644" y="220" width="1" height="25" fill="#FF0000"/>
<rect x="642" y="220" width="5" height="13" fill="#FF0000"/>
<rect x="652" y="222" width="1" height="23" fill="#FF0000"/>
<rect x="650" y="226" width="5" height="9" fill="#FF0000"/>
<rect x="660" y="223" width="1" height="22" fill="#FF0000"/>
<rect x="658" y="230" width="5" height="5" fill="#FF0000"/>
<rect x="668" y="225" width="1" height="20" fill="#FF0000"/>
<rect x="666" y="232" width="5" height="4" fill="#FF0000"/>
<rect x="676" y="227" width="1" height="19" fill="#FF0000"/>
<rect x="674" y="233" width="5" height="4" fill="#FF0000"/>
<rect x="684" y="229" width="1" height="18" fill="#FF0000"/>
<rect x="682" y="235" width="5" height="3" fill="#FF0000"/>
<rect x="692" y="231" width="1" height="16" fill="#FF0000"/>
<rect x="690" y="236" width="5" height="4" fill="#FF0000"/>
<rect x="700" y="230" width="1" height="16" fill="#FF0000"/>
<rect x="698" y="238" width="5" height="3" fill="#FF0000"/>
<rect x="708" y="237" width="1" height="6" fill="#00FFFF"/>
<rect x="706" y="239" width="5" height="1" fill="#FF0000"/>
<rect x="716" y="235" width="1" height="9" fill="#FF0000"/>
<rect x="714" y="239" width="5" height="1" fill="#FF0000"/>
<rect x="724" y="236" width="1" height="7" fill="#00FFFF"/>
<rect x="722" y="239" width="5" height="1" fill="#00FFFF"/>
</g>
<polygon points="203.60,202.70 205.25,206.64 209.49,206.10 206.90,209.50 209.49,212.90 205.25,212.36 203.60,216.30 201.95,212.36 197.71,212.90 200.30,209.50 197.71,206.10 201.95,206.64" fill="#ee82ee"/>
<path d="M212 212.5 L221.9 221.8 V225.3 L212 216.2 L202.1 225.3 V221.8 Z" fill="#ee82ee"/>
<rect x="210.2" y="214.5" width="3.6" height="19.5" fill="#ee82ee"/>
<polygon points="364.00,83.50 365.65,87.44 369.89,86.90 367.30,90.30 369.89,93.70 365.65,93.16 364.00,97.10 362.35,93.16 358.11,93.70 360.70,90.30 358.11,86.90 362.35,87.44" fill="#ee82ee"/>
<path d="M372 95.5 L381.9 104.8 V108.3 L372 99.2 L362.1 108.3 V104.8 Z" fill="#ee82ee"/>
<rect x="370.2" y="97.5" width="3.6" height="19.5" fill="#ee82ee"/>
<polygon points="419.80,52.50 421.45,56.44 425.69,55.90 423.10,59.30 425.69,62.70 421.45,62.16 419.80,66.10 418.15,62.16 413.91,62.70 416.50,59.30 413.91,55.90 418.15,56.44" fill="#d8d8d8"/>
<path d="M428.5 74 L438.4 64.7 V61.2 L428.5 70.3 L418.6 61.2 V64.7 Z" fill="#d8d8d8"/>
<rect x="426.7" y="52.7" width="3.6" height="19.299999999999997" fill="#d8d8d8"/>
<polygon points="587.40,165.50 589.05,169.44 593.29,168.90 590.70,172.30 593.29,175.70 589.05,175.16 587.40,179.10 585.75,175.16 581.51,175.70 584.10,172.30 581.51,168.90 585.75,169.44" fill="#d8d8d8"/>
<path d="M596.5 167.3 L606.4 158.0 V154.5 L596.5 163.60000000000002 L586.6 154.5 V158.0 Z" fill="#d8d8d8"/>
<rect x="594.7" y="145.8" width="3.6" height="19.5" fill="#d8d8d8"/>
<polygon points="707.70,203.50 709.35,207.44 713.59,206.90 711.00,210.30 713.59,213.70 709.35,213.16 707.70,217.10 706.05,213.16 701.81,213.70 704.40,210.30 701.81,206.90 706.05,207.44" fill="#d8d8d8"/>
<path d="M716.5 209 L726.4 199.7 V196.2 L716.5 205.3 L706.6 196.2 V199.7 Z" fill="#d8d8d8"/>
<rect x="714.7" y="188" width="3.6" height="19" fill="#d8d8d8"/>
<polyline points="12.5,526.4 20.5,500.8 28.5,477.2 36.5,488.7 44.5,450.0 52.5,474.5 60.5,463.0 68.5,457.0 76.5,443.0 84.5,434.2 92.5,414.7 100.5,401.7 108.5,401.7 116.5,401.7 124.5,408.7 132.5,408.7 140.5,428.3 148.5,428.3 156.5,428.3 164.5,471.3 172.5,493.2 180.5,511.9 188.5,501.4 196.5,499.8 204.5,467.5 212.5,455.5 220.5,431.3 228.5,402.6 236.5,398.7 244.5,399.0 252.5,402.0 260.5,414.7 268.5,434.3 276.5,434.3 284.5,434.3 292.5,434.3 300.5,422.3 308.5,409.6 316.5,416.2 324.5,437.4 332.5,470.6 340.5,504.4 348.5,503.2 356.5,475.1 364.5,472.1 372.5,447.9 380.5,420.8 388.5,420.8 396.5,426.8 404.5,434.3 412.5,473.6 420.5,516.0 428.5,514.8 436.5,524.9 444.5,535.8 452.5,544.5 460.5,549.1 468.5,546.0 476.5,540.0 484.5,540.0 492.5,540.9 500.5,540.9 508.5,539.4 516.5,533.1 524.5,538.5 532.5,521.9 540.5,499.2 548.5,464.5 556.5,426.8 564.5,429.8 572.5,438.9 580.5,455.5 588.5,479.3 596.5,524.9 604.5,525.8 612.5,525.8 620.5,525.8 628.5,538.5 636.5,543.0 644.5,527.9 652.5,503.8 660.5,467.5 668.5,429.2 676.5,438.9 684.5,438.9 692.5,463.9 700.5,472.0 708.5,490.2 716.5,467.5 724.5,450.0" fill="none" stroke="#ff0000" stroke-width="1.8" stroke-linejoin="round" shape-rendering="crispEdges" clip-path="url(#ci)"/>
<path d="M12 546 L18 552 H12 Z" fill="#778899"/>
<text class="ax" transform="translate(734.5,47) rotate(0.03)" textLength="32.5" lengthAdjust="spacingAndGlyphs">111.690</text>
<text class="ax" transform="translate(734.5,80) rotate(0.03)" textLength="32.5" lengthAdjust="spacingAndGlyphs">111.560</text>
<text class="ax" transform="translate(734.5,114) rotate(0.03)" textLength="32.5" lengthAdjust="spacingAndGlyphs">111.430</text>
<text class="ax" transform="translate(734.5,147) rotate(0.03)" textLength="32.5" lengthAdjust="spacingAndGlyphs">111.300</text>
<text class="ax" transform="translate(734.5,180) rotate(0.03)" textLength="32.5" lengthAdjust="spacingAndGlyphs">111.170</text>
<text class="ax" transform="translate(734.5,214) rotate(0.03)" textLength="32.5" lengthAdjust="spacingAndGlyphs">111.040</text>
<text class="ax" transform="translate(734.5,247) rotate(0.03)" textLength="32.5" lengthAdjust="spacingAndGlyphs">110.910</text>
<text class="ax" transform="translate(734.5,280) rotate(0.03)" textLength="32.5" lengthAdjust="spacingAndGlyphs">110.780</text>
<text class="ax" transform="translate(734.5,313) rotate(0.03)" textLength="32.5" lengthAdjust="spacingAndGlyphs">110.650</text>
<text class="ax" transform="translate(734.5,347) rotate(0.03)" textLength="32.5" lengthAdjust="spacingAndGlyphs">110.520</text>
<text class="ax" transform="translate(734.5,380) rotate(0.03)" textLength="32.5" lengthAdjust="spacingAndGlyphs">110.390</text>
<text class="ax" transform="translate(731.5,392) rotate(0.03)" textLength="14.4" lengthAdjust="spacingAndGlyphs">120</text>
<text class="ax" transform="translate(731.5,402) rotate(0.03)" textLength="14.4" lengthAdjust="spacingAndGlyphs">100</text>
<text class="ax" transform="translate(731.5,421) rotate(0.03)" textLength="9.8" lengthAdjust="spacingAndGlyphs">75</text>
<text class="ax" transform="translate(731.5,440) rotate(0.03)" textLength="9.8" lengthAdjust="spacingAndGlyphs">50</text>
<text class="ax" transform="translate(731.5,459) rotate(0.03)" textLength="9.8" lengthAdjust="spacingAndGlyphs">25</text>
<text class="ax" transform="translate(731.5,479) rotate(0.03)" textLength="18.2" lengthAdjust="spacingAndGlyphs">0.00</text>
<text class="ax" transform="translate(730.8,498) rotate(0.03)" textLength="12.8" lengthAdjust="spacingAndGlyphs">-25</text>
<text class="ax" transform="translate(730.8,517) rotate(0.03)" textLength="12.8" lengthAdjust="spacingAndGlyphs">-50</text>
<text class="ax" transform="translate(730.8,536) rotate(0.03)" textLength="12.8" lengthAdjust="spacingAndGlyphs">-75</text>
<text class="ax" transform="translate(731.9,549) rotate(0.03)" textLength="17.8" lengthAdjust="spacingAndGlyphs">-100</text>
<text class="ax" transform="translate(11.1,565) rotate(0.03)" textLength="49.6" lengthAdjust="spacingAndGlyphs">30 Jun 2021</text>
<text class="ax" transform="translate(75.1,565) rotate(0.03)" textLength="53.3" lengthAdjust="spacingAndGlyphs">30 Jun 16:00</text>
<text class="ax" transform="translate(139.1,565) rotate(0.03)" textLength="45.1" lengthAdjust="spacingAndGlyphs">1 Jul 00:00</text>
<text class="ax" transform="translate(203.1,565) rotate(0.03)" textLength="45.1" lengthAdjust="spacingAndGlyphs">1 Jul 08:00</text>
<text class="ax" transform="translate(267.1,565) rotate(0.03)" textLength="45.1" lengthAdjust="spacingAndGlyphs">1 Jul 16:00</text>
<text class="ax" transform="translate(331.1,565) rotate(0.03)" textLength="45.1" lengthAdjust="spacingAndGlyphs">2 Jul 00:00</text>
<text class="ax" transform="translate(395.1,565) rotate(0.03)" textLength="45.1" lengthAdjust="spacingAndGlyphs">2 Jul 08:00</text>
<text class="ax" transform="translate(459.1,565) rotate(0.03)" textLength="45.1" lengthAdjust="spacingAndGlyphs">2 Jul 16:00</text>
<text class="ax" transform="translate(523.1,565) rotate(0.03)" textLength="45.1" lengthAdjust="spacingAndGlyphs">5 Jul 00:00</text>
<text class="ax" transform="translate(587.1,565) rotate(0.03)" textLength="45.1" lengthAdjust="spacingAndGlyphs">5 Jul 08:00</text>
<text class="ax" transform="translate(651.1,565) rotate(0.03)" textLength="45.1" lengthAdjust="spacingAndGlyphs">5 Jul 16:00</text>
<text class="ax" transform="translate(715.1,565) rotate(0.03)" textLength="45.1" lengthAdjust="spacingAndGlyphs">6 Jul 00:00</text>
<path d="M15 41 h7 v1 h-1 v1 h-1 v1 h-1 v1 h-1 v-1 h-1 v-1 h-1 v-1 h-1 Z" fill="#fff" shape-rendering="crispEdges"/>
<text class="ax" transform="translate(27.6,46) rotate(0.03)" textLength="50.2" lengthAdjust="spacingAndGlyphs">USDJPY,H1</text>
<text class="ax" transform="translate(84.7,46) rotate(0.03)" textLength="32.5" lengthAdjust="spacingAndGlyphs">113.736</text>
<text class="ax" transform="translate(120.7,46) rotate(0.03)" textLength="32.5" lengthAdjust="spacingAndGlyphs">113.760</text>
<text class="ax" transform="translate(156.7,46) rotate(0.03)" textLength="32.5" lengthAdjust="spacingAndGlyphs">113.609</text>
<text class="ax" transform="translate(192.7,46) rotate(0.03)" textLength="32.5" lengthAdjust="spacingAndGlyphs">113.661</text>
<text class="ax" transform="translate(16.2,394) rotate(0.03)" textLength="42.8" lengthAdjust="spacingAndGlyphs">R1(9) 86.7</text>
</svg></body></html>
